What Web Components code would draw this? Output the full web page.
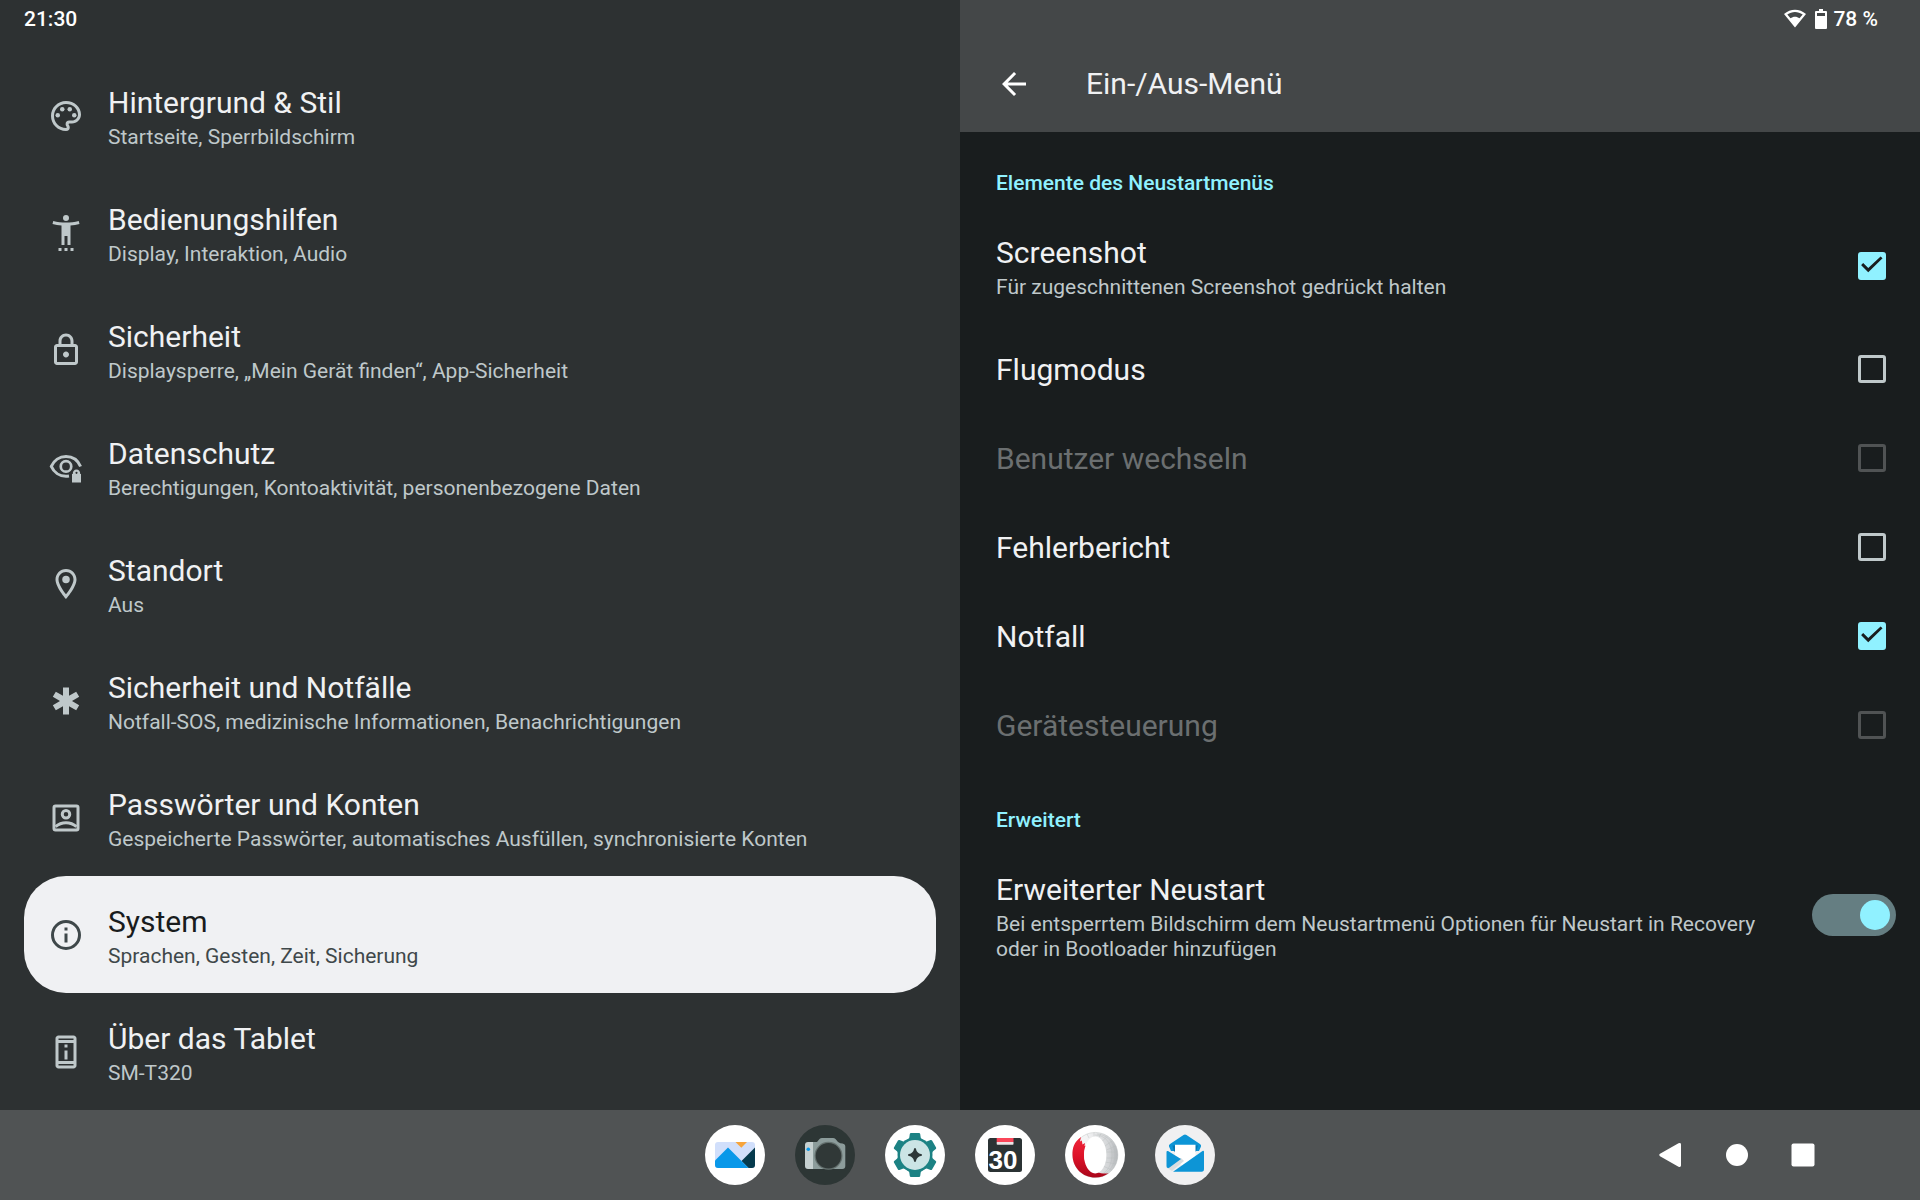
<!DOCTYPE html>
<html lang="de">
<head>
<meta charset="utf-8">
<meta name="viewport" content="width=device-width, initial-scale=1">
<title>Einstellungen</title>
<style>
    :root {
        --surface: #191d1e;
        --surface-list: #2d3132;
        --surface-bar: #444748;
        --taskbar: #505354;
        --text: #f0f1f3;
        --text-muted: #bfc8ca;
        --accent: #90f1ff;
    }
    body {
        margin: 0;
        background: var(--surface);
        color: var(--text);
        font-family: Roboto, "Noto Sans", sans-serif;
    }
</style>
</head>
<body>

<tablet-shell>
    <status-bar slot="status" time="21:30" battery="78 %"></status-bar>

    <settings-nav slot="list">
        <nav-entry icon="palette">Hintergrund &amp; Stil<span slot="summary">Startseite, Sperrbildschirm</span></nav-entry>
        <nav-entry icon="accessibility">Bedienungshilfen<span slot="summary">Display, Interaktion, Audio</span></nav-entry>
        <nav-entry icon="lock">Sicherheit<span slot="summary">Displaysperre, „Mein Gerät finden“, App-Sicherheit</span></nav-entry>
        <nav-entry icon="privacy">Datenschutz<span slot="summary">Berechtigungen, Kontoaktivität, personenbezogene Daten</span></nav-entry>
        <nav-entry icon="place">Standort<span slot="summary">Aus</span></nav-entry>
        <nav-entry icon="emergency">Sicherheit und Notfälle<span slot="summary">Notfall-SOS, medizinische Informationen, Benachrichtigungen</span></nav-entry>
        <nav-entry icon="account">Passwörter und Konten<span slot="summary">Gespeicherte Passwörter, automatisches Ausfüllen, synchronisierte Konten</span></nav-entry>
        <nav-entry icon="info" selected>System<span slot="summary">Sprachen, Gesten, Zeit, Sicherung</span></nav-entry>
        <nav-entry icon="device">Über das Tablet<span slot="summary">SM-T320</span></nav-entry>
    </settings-nav>

    <settings-page slot="detail" heading="Ein-/Aus-Menü">
        <settings-group heading="Elemente des Neustartmenüs">
            <setting-row checked>Screenshot<span slot="summary">Für zugeschnittenen Screenshot gedrückt halten</span></setting-row>
            <setting-row>Flugmodus</setting-row>
            <setting-row disabled>Benutzer wechseln</setting-row>
            <setting-row>Fehlerbericht</setting-row>
            <setting-row checked>Notfall</setting-row>
            <setting-row disabled>Gerätesteuerung</setting-row>
        </settings-group>
        <settings-group heading="Erweitert">
            <setting-row type="switch" checked>Erweiterter Neustart<span slot="summary">Bei entsperrtem Bildschirm dem Neustartmenü Optionen für Neustart in Recovery oder in Bootloader hinzufügen</span></setting-row>
        </settings-group>
    </settings-page>

    <task-bar slot="taskbar"></task-bar>
</tablet-shell>

<script>
// Line icons, all on a 24 grid
const ICONS = {
    palette: `<path d="M12 22C6.49 22 2 17.51 2 12S6.49 2 12 2s10 4.04 10 9c0 3.31-2.69 6-6 6h-1.77c-.28 0-.5.22-.5.5 0 .12.05.23.13.33.41.47.64 1.06.64 1.67A2.5 2.5 0 0 1 12 22zm0-18c-4.41 0-8 3.59-8 8s3.59 8 8 8c.28 0 .5-.22.5-.5a.54.54 0 0 0-.14-.35c-.41-.46-.63-1.05-.63-1.65a2.5 2.5 0 0 1 2.5-2.5H16c2.21 0 4-1.79 4-4 0-3.86-3.59-7-8-7z"/><circle cx="6.5" cy="11.5" r="1.5"/><circle cx="9.5" cy="7.5" r="1.5"/><circle cx="14.5" cy="7.5" r="1.5"/><circle cx="17.5" cy="11.5" r="1.5"/>`,
    accessibility: `<path d="M20.5 4c-2.61.7-5.67 1-8.5 1s-5.89-.3-8.5-1L3 6c1.86.5 4 .83 6 1v13h2v-6h2v6h2V7c2-.17 4.14-.5 6-1l-.5-2z"/><circle cx="12" cy="2" r="2"/><path d="M7 22h2v2H7zM11 22h2v2h-2zM15 22h2v2h-2z"/>`,
    lock: `<path d="M18 8h-1V6c0-2.76-2.24-5-5-5S7 3.24 7 6v2H6c-1.1 0-2 .9-2 2v10c0 1.1.9 2 2 2h12c1.1 0 2-.9 2-2V10c0-1.1-.9-2-2-2zM9 6c0-1.66 1.34-3 3-3s3 1.34 3 3v2H9V6zm9 14H6V10h12v10zm-6-3c1.1 0 2-.9 2-2s-.9-2-2-2-2 .9-2 2 .9 2 2 2z"/>`,
    privacy: `<path d="M21.7 11.7C20 7.6 16.3 5 12 5S3.9 7.7 2.2 11.6C3.9 15.5 7.7 18.2 12 18.2c.7 0 1.4-.1 2-.2" fill="none" stroke="currentColor" stroke-width="2"/><circle cx="12" cy="11.6" r="3.5" fill="none" stroke="currentColor" stroke-width="1.8"/><path fill-rule="evenodd" d="M16 22.3v-5.7h.5c0-1.7 1-2.9 2.5-2.9s2.5 1.2 2.5 2.9h.5v5.7zM19 15.2a.7.7 0 1 0 0 1.4.7.7 0 0 0 0-1.4z"/>`,
    place: `<path d="M12 2C8.13 2 5 5.13 5 9c0 5.25 7 13 7 13s7-7.75 7-13c0-3.87-3.13-7-7-7zM7 9c0-2.76 2.24-5 5-5s5 2.24 5 5c0 2.88-2.88 7.19-5 9.88C9.92 16.21 7 11.85 7 9z"/><circle cx="12" cy="9" r="2.5"/>`,
    emergency: `<path d="M20.79 9.23l-2-3.46L14 8.54V3h-4v5.54L5.21 5.77l-2 3.46L8 12l-4.79 2.77 2 3.46L10 15.46V21h4v-5.54l4.79 2.77 2-3.46L16 12z"/>`,
    account: `<g fill="none" stroke="currentColor" stroke-width="2"><rect x="4" y="4" width="16" height="16" rx="1"/><circle cx="12" cy="9.5" r="2.5"/><path d="M5 17.8c2-1.8 4.5-2.7 7-2.7s5 .9 7 2.7"/></g>`,
    info: `<circle cx="12" cy="12" r="9" fill="none" stroke="currentColor" stroke-width="2"/><path d="M11 7h2v2h-2zM11 11h2v6h-2z"/>`,
    device: `<path fill-rule="evenodd" d="M7 1h10c1.1 0 2 .9 2 2v18c0 1.1-.9 2-2 2H7c-1.1 0-2-.9-2-2V3c0-1.1.9-2 2-2zM7 3v1h10V3zM7 6v12h10V6zM7 20v1h10v-1z"/><path d="M11 7h2v2h-2zM11 11h2v6h-2z"/>`,
    back: `<path d="M20 11H7.83l5.59-5.59L12 4l-8 8 8 8 1.41-1.41L7.83 13H20v-2z"/>`
};

const icon = name => `<svg viewBox="0 0 24 24" width="36" height="36" fill="currentColor" aria-hidden="true">${ICONS[name]}</svg>`;

// App icons, drawn on a 60 grid
const APPS = [
    ['Galerie', `
        <clipPath id="card"><rect x="10" y="17" width="40" height="26" rx="3"/></clipPath>
        <circle cx="30" cy="30" r="30" fill="#fff"/>
        <g clip-path="url(#card)">
            <path fill="#d1dffb" d="M10 17h40v26H10z"/>
            <path fill="#f6a43b" d="M30.5 17H42l-5.7 5.7z"/>
            <path fill="#053a4d" d="M50 22.5L36.5 36l7 7H50z"/>
            <path fill="#0998e9" d="M10 35.5l13-13L43.5 43H10z"/>
        </g>`],
    ['Kamera', `
        <circle cx="30" cy="30" r="30" fill="#2d3635"/>
        <path fill="#8c9c9b" d="M17 17h5l2.5-3q1-1 2.5-1h11q1.5 0 2.5 1l2.5 3q2.5 1.5 4.5 1.5 2.8.5 2.8 3V41q0 3-3 3H17z"/>
        <path fill="#c6d0d0" d="M13 17h5v27h-5q-3 0-3-3V20q0-3 3-3z"/>
        <circle cx="33.5" cy="30.8" r="14" fill="#65716f"/>
        <circle cx="33.5" cy="30.8" r="12.8" fill="#303837"/>
        <circle cx="13.3" cy="24.2" r="1.8" fill="#0998e9"/>`],
    ['Einstellungen', `
        <circle cx="30" cy="30" r="30" fill="#fff"/>
        <g fill="#1c8284">
            <circle cx="30" cy="30" r="17.5"/>
            ${[0, 60, 120, 180, 240, 300].map(a => `<path transform="rotate(${a} 30 30)" d="M22 15q2-.7 2.3-2.5l.5-3.5q.2-1 1.2-1h8q1 0 1.2 1l.5 3.5q.3 1.8 2.3 2.5z"/>`).join('')}
        </g>
        <circle cx="30" cy="30" r="15" fill="#cbe4e5"/>
        <path fill="#2d3738" d="M30 23q.8 0 1 1 .8 4.2 5 5 1 .2 1 1t-1 1q-4.2.8-5 5-.2 1-1 1t-1-1q-.8-4.2-5-5-1-.2-1-1t1-1q4.2-.8 5-5 .2-1 1-1z"/>`],
    ['Kalender', `
        <circle cx="30" cy="30" r="30" fill="#fff"/>
        <rect x="13" y="13" width="34" height="34" rx="2.5" fill="#2b3334"/>
        <path fill="#fa4659" d="M21.7 13h16.8v4H21.7z"/>
        <path fill="#ece4e5" d="M21.7 17h16.8v2q0 .8-.8.8H22.5q-.8 0-.8-.8z"/>
        <text x="28" y="44" text-anchor="middle" fill="#fff" font-family="Liberation Sans, sans-serif" font-weight="700" font-size="26">30</text>`],
    ['Opera', `
        <linearGradient id="grey"><stop offset=".3" stop-color="#f4f4f5"/><stop offset=".8" stop-color="#d2d4d6"/><stop offset="1" stop-color="#b4b7ba"/></linearGradient>
        <linearGradient id="red" x2="0" y2="1"><stop stop-color="#f0263a"/><stop offset=".5" stop-color="#dc1228"/><stop offset="1" stop-color="#a9071b"/></linearGradient>
        <circle cx="30" cy="30" r="30" fill="#fff"/>
        <circle cx="30.3" cy="30" r="22.6" fill="url(#grey)"/>
        <g fill="none" stroke="#b6babc" stroke-width=".4">
            <circle cx="30.3" cy="30" r="22.6"/>
            <path d="M30 10c10 0 17 8 17 20S40 50 31 51M32 9c12 1 18 10 18 21s-7 19-16 21M22 9l2 4M29 7.5v4M36 8.5l-2 4M42 11.5l-5 5M47 16l-7 5M50.5 21l-9 4M52.5 27H41M53 33H41M51 39l-11-2M47 45l-9-4"/>
        </g>
        <path fill="url(#red)" d="M16 12C9 17 7.3 23 7.5 30c.3 13 10 22.5 22.8 22.5 5 0 9.5-1.5 13.3-4.3C40 49 36 48.5 32 47 24 44 19 38 19 30c0-3.5 1-7 2.5-9.5l-2 .5.5-3-2.5 1.5-.7-4-1.8 1z"/>
        <ellipse cx="30.2" cy="30" rx="11.2" ry="18.4" fill="#fff"/>`],
    ['E-Mail', `
        <circle cx="30" cy="30" r="30" fill="#f0f0f1"/>
        <path fill="#0d95d6" d="M30 9.5q.7 0 1.5.6L45 19q1.5 1 1 2.5L44 26H16l-2-4.5q-.5-1.5 1-2.5l13.5-8.9q.8-.6 1.5-.6z"/>
        <path fill="#0678b4" d="M17.5 20.5H43l-2 6H19z"/>
        <path fill="#fff" d="M20 19.7h20.5V31L28 41l-8-6z"/>
        <path fill="#d9dde0" d="M12 43l14-10 3 3-12 10z"/>
        <path fill="#0d95d6" d="M11.5 27q0-1.5 1.5-1l13 8-11.5 8.5q-3 1.5-3-1.5z"/>
        <path fill="#0d95d6" d="M47.5 26q1.5-.7 1.5 1v17q0 2.7-2.5 2.7H18z"/>`]
];

class TabletShell extends HTMLElement {
    constructor() {
        super();
        this.attachShadow({ mode: 'open' });
    }

    connectedCallback() {
        this.shadowRoot.innerHTML = `
        <style>
            :host {
                display: grid;
                grid-template-columns: 1fr 1fr;
                grid-template-rows: auto 1fr auto;
                min-height: 100vh;
            }
            /* The status bar shares its row with the top of both panes */
            slot[name="status"]::slotted(*) { grid-area: 1 / 1 / 2 / 3; z-index: 1; }
            slot[name="list"]::slotted(*) { grid-area: 1 / 1 / 3 / 2; }
            slot[name="detail"]::slotted(*) { grid-area: 1 / 2 / 3 / 3; }
            slot[name="taskbar"]::slotted(*) { grid-area: 3 / 1 / 4 / 3; }
        </style>
        <slot name="status"></slot>
        <slot name="list"></slot>
        <slot name="detail"></slot>
        <slot name="taskbar"></slot>
        `;
    }
}

class StatusBar extends HTMLElement {
    constructor() {
        super();
        this.attachShadow({ mode: 'open' });
    }

    connectedCallback() {
        this.shadowRoot.innerHTML = `
        <style>
            :host {
                display: flex;
                justify-content: space-between;
                align-items: center;
                padding: 0 42px 0 24px;
                line-height: 38px;
                font-size: 21px;
                font-weight: 500;
                color: #fff;
            }
            .system { display: flex; align-items: center; }
            .wifi { margin-right: 9px; }
            .battery { margin-right: 6px; }
        </style>
        <span>${this.getAttribute('time')}</span>
        <span class="system">
            <svg class="wifi" width="22" height="20" viewBox="0 0 22 20" fill="#fff" fill-rule="evenodd" role="img" aria-label="WLAN">
                <path d="M0 5C6.5-.7 15.5-.7 22 5L11 18.5zM3.3 5.5l3.2 3.8c2.6-2.2 6.4-2.2 9 0l3.2-3.8c-4.7-3.5-10.7-3.5-15.4 0z"/>
            </svg>
            <svg class="battery" width="12" height="20" viewBox="0 0 12 20" fill="#fff" fill-rule="evenodd" role="img" aria-label="Akku">
                <path d="M4 0h4v2h3q1 0 1 1v16q0 1-1 1H1q-1 0-1-1V3q0-1 1-1h3zM2 4v3h8V4z"/>
            </svg>
            <span>${this.getAttribute('battery')}</span>
        </span>
        `;
    }
}

class SettingsNav extends HTMLElement {
    constructor() {
        super();
        this.attachShadow({ mode: 'open' });
    }

    connectedCallback() {
        this.shadowRoot.innerHTML = `
        <style>
            :host {
                display: block;
                background: var(--surface-list);
                padding: 57px 24px 0;
            }
        </style>
        <nav><slot></slot></nav>
        `;
    }
}

class NavEntry extends HTMLElement {
    constructor() {
        super();
        this.attachShadow({ mode: 'open' });
    }

    connectedCallback() {
        this.shadowRoot.innerHTML = `
        <style>
            :host { display: block; }
            a {
                display: flex;
                align-items: center;
                gap: 24px;
                padding: 24px;
                border-radius: 42px;
                color: var(--text);
                text-decoration: none;
            }
            svg { flex: none; color: var(--text-muted); }
            .title { font-size: 30px; line-height: 44px; }
            .summary { font-size: 21px; line-height: 25px; color: var(--text-muted); }
            :host([selected]) a { background: #f0f1f3; color: #191c1d; }
            :host([selected]) svg,
            :host([selected]) .summary { color: #3f484a; }
        </style>
        <a href="#${this.getAttribute('icon')}" ${this.hasAttribute('selected') ? 'aria-current="page"' : ''}>
            ${icon(this.getAttribute('icon'))}
            <div>
                <div class="title"><slot></slot></div>
                <div class="summary"><slot name="summary"></slot></div>
            </div>
        </a>
        `;
    }
}

class SettingsPage extends HTMLElement {
    constructor() {
        super();
        this.attachShadow({ mode: 'open' });
    }

    connectedCallback() {
        this.shadowRoot.innerHTML = `
        <style>
            :host { display: block; background: var(--surface); }
            header {
                display: flex;
                align-items: center;
                gap: 54px;
                padding: 62px 36px 26px;
                background: var(--surface-bar);
            }
            button {
                display: flex;
                padding: 0;
                border: 0;
                background: none;
                color: #fff;
            }
            h1 { margin: 0; font-size: 30px; line-height: 44px; font-weight: 400; }
        </style>
        <header>
            <button type="button" aria-label="Zurück">${icon('back')}</button>
            <h1>${this.getAttribute('heading')}</h1>
        </header>
        <main><slot></slot></main>
        `;
    }
}

class SettingsGroup extends HTMLElement {
    constructor() {
        super();
        this.attachShadow({ mode: 'open' });
    }

    connectedCallback() {
        this.shadowRoot.innerHTML = `
        <style>
            :host { display: block; }
            h2 {
                margin: 0;
                padding: 39px 36px 11px;
                font-size: 21px;
                line-height: 25px;
                font-weight: 500;
                color: var(--accent);
            }
        </style>
        <h2>${this.getAttribute('heading')}</h2>
        <slot></slot>
        `;
    }
}

class SettingRow extends HTMLElement {
    constructor() {
        super();
        this.attachShadow({ mode: 'open' });
    }

    connectedCallback() {
        const isSwitch = this.getAttribute('type') === 'switch';
        const hasSummary = this.querySelector('[slot="summary"]') !== null;
        const state = ['checked', 'disabled'].filter(name => this.hasAttribute(name)).join(' ');

        this.shadowRoot.innerHTML = `
        <style>
            :host {
                display: flex;
                align-items: center;
                gap: 36px;
                padding: 0 34px 0 36px;
            }
            :host([type="switch"]) { padding-right: 24px; }
            label { flex: 1; padding: 24px 0 21px; font-size: 30px; line-height: 44px; }
            :host([disabled]) label { color: #6b6f70; }
            .summary {
                display: block;
                margin-bottom: 3px;
                font-size: 21px;
                line-height: 25px;
                color: var(--text-muted);
            }
            input {
                appearance: none;
                flex: none;
                display: grid;
                place-content: center;
                box-sizing: border-box;
                width: 28px;
                height: 28px;
                margin: 0;
                border: 3px solid var(--text-muted);
                border-radius: 3px;
            }
            input:disabled { border-color: #505354; }
            input:checked { border-color: var(--accent); background: var(--accent); }
            /* Tick */
            input:not(.switch):checked::before {
                content: "";
                width: 22px;
                height: 22px;
                background: var(--surface);
                clip-path: polygon(3% 46%, 10% 39%, 33% 61%, 89% 9%, 98% 17%, 33% 81%, 1% 49%);
            }
            .switch {
                justify-content: end;
                width: 84px;
                height: 42px;
                padding: 0 6px;
                border: 0;
                border-radius: 21px;
            }
            .switch:checked { background: #657e82; }
            .switch::before {
                content: "";
                width: 30px;
                height: 30px;
                border-radius: 50%;
                background: var(--accent);
            }
        </style>
        <label for="control"><slot></slot>${hasSummary ? '<span class="summary"><slot name="summary"></slot></span>' : ''}</label>
        <input id="control" type="checkbox" ${isSwitch ? 'class="switch" role="switch"' : ''} ${state}>
        `;
    }
}

class TaskBar extends HTMLElement {
    constructor() {
        super();
        this.attachShadow({ mode: 'open' });
    }

    connectedCallback() {
        this.shadowRoot.innerHTML = `
        <style>
            :host {
                display: grid;
                grid-template-columns: 1fr auto 1fr;
                align-items: center;
                padding: 15px 0;
                background: var(--taskbar);
            }
            .apps { grid-column: 2; display: flex; gap: 30px; }
            .keys { display: flex; justify-content: flex-end; padding-right: 84px; }
            button {
                display: flex;
                justify-content: center;
                padding: 0;
                border: 0;
                background: none;
            }
            .keys button { width: 66px; }
        </style>
        <div class="apps">
            ${APPS.map(([name, art]) => `
                <button type="button" aria-label="${name}">
                    <svg viewBox="0 0 60 60" width="60" height="60">${art}</svg>
                </button>
            `).join('')}
        </div>
        <div class="keys">
            <button type="button" aria-label="Zurück">
                <svg viewBox="0 0 24 24" width="24" height="24" fill="#fff"><path d="M1 10.8L19.5.3Q22-.5 22 1.5v21q0 2-2.5 1.2L1 13.2q-1.5-1.2 0-2.4z"/></svg>
            </button>
            <button type="button" aria-label="Startseite">
                <svg viewBox="0 0 24 24" width="24" height="24" fill="#fff"><circle cx="12" cy="12" r="11"/></svg>
            </button>
            <button type="button" aria-label="Übersicht">
                <svg viewBox="0 0 24 24" width="24" height="24" fill="#fff"><rect x="0.5" y="0.5" width="23" height="23" rx="2"/></svg>
            </button>
        </div>
        `;
    }
}

customElements.define('tablet-shell', TabletShell);
customElements.define('status-bar', StatusBar);
customElements.define('settings-nav', SettingsNav);
customElements.define('nav-entry', NavEntry);
customElements.define('settings-page', SettingsPage);
customElements.define('settings-group', SettingsGroup);
customElements.define('setting-row', SettingRow);
customElements.define('task-bar', TaskBar);
</script>
</body>
</html>
